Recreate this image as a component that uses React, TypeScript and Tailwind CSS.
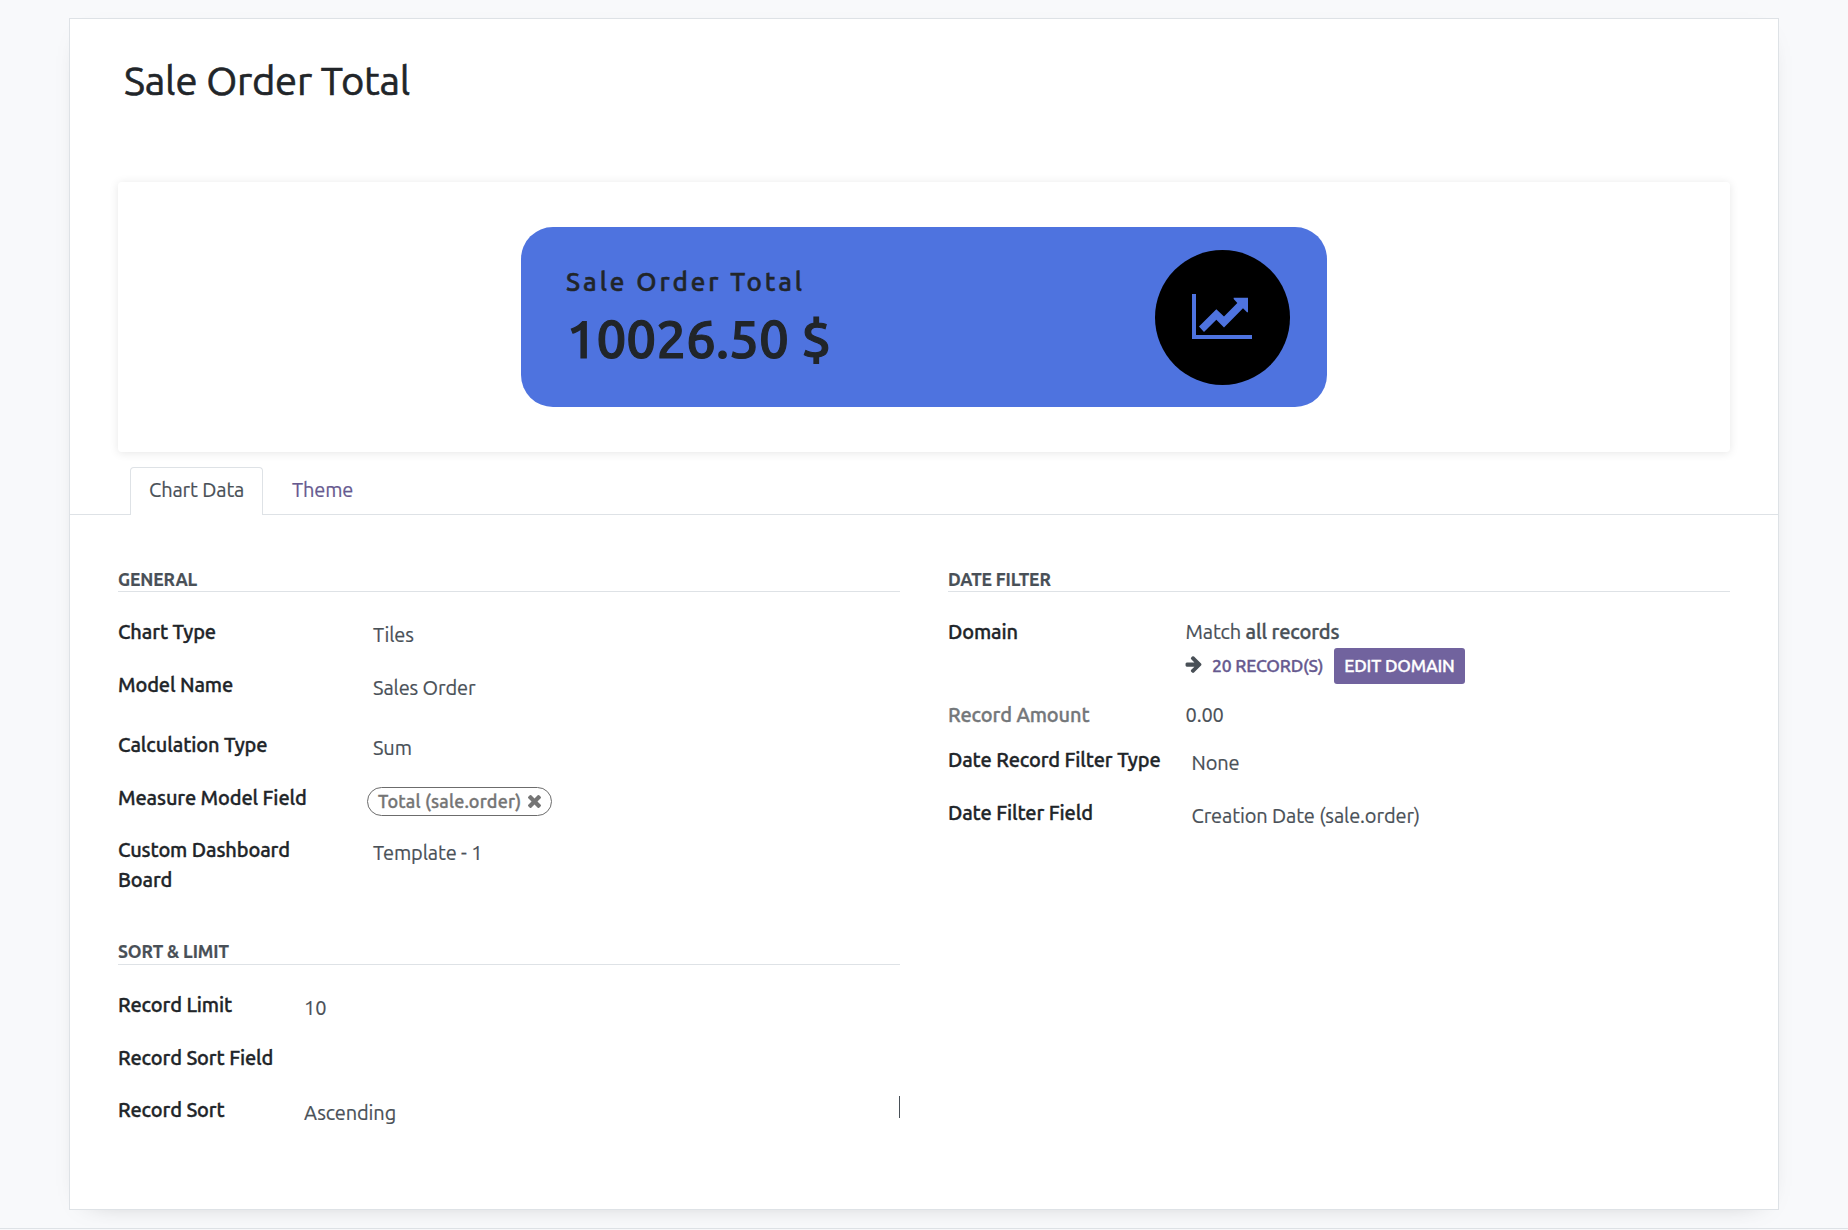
import React from "react";

const FONT = "font-['Ubuntu','Noto_Sans','Open_Sans',sans-serif]";

function LineChartIcon() {
  return (
    <svg className="h-[45px] w-[60px]" viewBox="276 221 180 136" preserveAspectRatio="none" fill="#4e73df">
      <path d="M276 221h12v124h168v12H276z" />
      <path d="M297 319 349 267 372 289 412 248 401 236V232H444V276H441L429 264 372 322 349 299 312 336z" />
    </svg>
  );
}

function ArrowRightIcon() {
  return (
    <svg className="mb-[3px] h-[17px] w-[17px]" viewBox="0 165 1472 1574" fill="#495057">
      <path d="M1472 960q0 54-37 91l-651 651q-39 37-91 37-51 0-90-37l-75-75q-38-38-38-91t38-91l293-293h-704q-52 0-84.500-37.500t-32.500-90.500v-128q0-53 32.500-90.500t84.500-37.500h704l-293-294q-38-36-38-90t38-90l75-75q38-38 90-38 53 0 91 38l651 651q37 35 37 90z" />
    </svg>
  );
}

function TimesIcon() {
  return (
    <svg className="size-[13px]" viewBox="110 366 1188 1188" fill="currentColor">
      <path d="M1298 1322q0 40-28 68l-136 136q-28 28-68 28t-68-28l-294-294-294 294q-28 28-68 28t-68-28l-136-136q-28-28-28-68t28-68l294-294-294-294q-28-28-28-68t28-68l136-136q28-28 68-28t68 28l294 294 294-294q28-28 68-28t68 28l136 136q28 28 28 68t-28 68l-294 294 294 294q28 28 28 68z" />
    </svg>
  );
}

function Heading({ children, className = "leading-[25px]" }: { children: React.ReactNode; className?: string }) {
  return (
    <div className={`h-[25px] border-b border-[#dee2e6] text-[17.5px] font-bold text-[#495057] ${className}`}>
      {children}
    </div>
  );
}

type RowProps = {
  label: React.ReactNode;
  labelClass?: string;
  valueClass?: string;
  className: string;
  children?: React.ReactNode;
};

function Row({ label, labelClass = "w-[255px]", valueClass = "pt-[3px]", className, children }: RowProps) {
  return (
    <div className={`flex items-start ${className}`}>
      <div className={`shrink-0 font-medium [-webkit-text-stroke:0.35px] ${labelClass}`}>{label}</div>
      <div className={`text-[#495057] ${valueClass}`}>{children}</div>
    </div>
  );
}

export default function App() {
  return (
    <div className={`h-[1230px] w-[1848px] overflow-hidden bg-[#f8f9fb] text-[20px] leading-[31px] tracking-[-0.12px] text-[#212529] whitespace-nowrap [-webkit-text-stroke:0.2px] ${FONT}`}>
      <div className="h-[1229px] border-b border-[#dee2e6] pt-[18px] pl-[69px]">
        <main className="h-[1192px] w-[1710px] border border-[#dee2e6] bg-white pt-[33px] shadow-[0_7px_28px_-21px_rgba(0,0,0,0.4)]">
          <h1 className="ml-[54px] text-[40px] leading-[57px] tracking-[-0.22px] [-webkit-text-stroke:0.6px]">Sale Order Total</h1>

          <section className="mx-[48px] mt-[73px] flex h-[270px] items-center justify-center rounded-[4px] shadow-[0_1px_10px_rgba(0,0,0,0.1)]">
            <div className="flex h-[180px] w-[806px] items-start justify-between rounded-[32px] bg-[#4e73df] pr-[37px] pl-[45px]">
              <div className="pt-[38px]">
                <div className="text-[26px] leading-[34px] font-medium tracking-[2.88px] [-webkit-text-stroke:0.5px]">Sale Order Total</div>
                <div className="mt-[4px] ml-[0.5px] text-[53px] leading-[71px] font-medium tracking-normal [-webkit-text-stroke:1.2px]">10026.50 $</div>
              </div>
              <div className="mt-[22.5px] flex size-[135px] items-center justify-center rounded-full bg-black pr-px pb-[2px]">
                <LineChartIcon />
              </div>
            </div>
          </section>

          <nav className="mt-[15px] flex h-[48px] border-b border-[#dee2e6] pl-[60px]">
            <div className="h-[48px] w-[133px] rounded-t-[4px] border border-b-0 border-[#dee2e6] bg-white pt-[6px] pl-[18px] text-[#495057]">Chart Data</div>
            <div className="pt-[7px] pl-[29px] text-[#66598f]">Theme</div>
          </nav>

          <div className="mx-[48px] mt-[52px] grid grid-cols-2 gap-[48px]">
            <div>
              <Heading>GENERAL</Heading>
              <div className="pt-[24px]">
                <Row className="h-[53px]" label="Chart Type">Tiles</Row>
                <Row className="h-[60px]" label="Model Name">Sales Order</Row>
                <Row className="h-[53px]" label="Calculation Type">Sum</Row>
                <Row className="h-[52px]" labelClass="w-[249px]" valueClass="pt-[5px]" label="Measure Model Field">
                  <div className="flex h-[29px] w-[185px] items-center justify-between rounded-full border border-[#6c6c6c] px-[10px] text-[18px] leading-[27px] font-medium tracking-[0.18px] text-[#757575] [-webkit-text-stroke:0.35px]">
                    Total (sale.order)
                    <TimesIcon />
                  </div>
                </Row>
                <Row
                  className="h-[106px]"
                  label={
                    <>
                      <div className="h-[30px]">Custom Dashboard</div>
                      <div>Board</div>
                    </>
                  }
                >
                  Template - 1
                </Row>
              </div>

              <Heading className="leading-[23px]">SORT &amp; LIMIT</Heading>
              <div className="pt-[24px]">
                <Row className="h-[53px]" labelClass="w-[186px]" label="Record Limit">10</Row>
                <Row className="h-[52px]" labelClass="w-[186px]" label="Record Sort Field" />
                <Row className="h-[53px]" labelClass="w-[186px]" valueClass="flex grow justify-between pt-[3px]" label="Record Sort">
                  <span>Ascending</span>
                  <span className="-mt-px h-[22px] w-px bg-[#495057]" />
                </Row>
              </div>
            </div>

            <div>
              <Heading>DATE FILTER</Heading>
              <div className="pt-[24px]">
                <Row className="h-[83px]" labelClass="w-[237px]" valueClass="" label="Domain">
                  <div className="pl-[0.5px]">
                    Match <span className="font-medium [-webkit-text-stroke:0.35px]">all records</span>
                  </div>
                  <div className="mt-px flex h-[36px] items-center text-[17.5px] leading-[30px] font-medium tracking-[-0.2px] [-webkit-text-stroke:0.35px]">
                    <ArrowRightIcon />
                    <span className="ml-[10px] w-[122px] text-[#66598f]">20 RECORD(S)</span>
                    <button className="h-[36px] w-[131px] rounded-[3px] bg-[#71639e] text-white">EDIT DOMAIN</button>
                  </div>
                </Row>
                <Row className="h-[45px]" labelClass="w-[237.5px] text-[#74777a]" valueClass="" label="Record Amount">0.00</Row>
                <Row className="h-[53px]" labelClass="w-[243.5px]" label="Date Record Filter Type">None</Row>
                <Row className="h-[53px]" labelClass="w-[243.5px]" label="Date Filter Field">Creation Date (sale.order)</Row>
              </div>
            </div>
          </div>
        </main>
      </div>
    </div>
  );
}
